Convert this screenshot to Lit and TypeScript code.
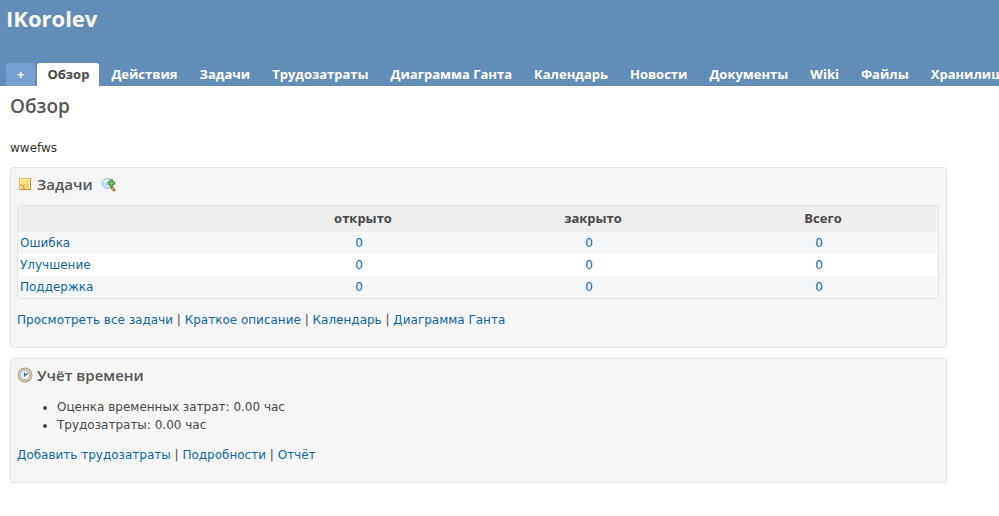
import { LitElement, html, css, svg } from "lit";
import { customElement } from "lit/decorators.js";

const TABS = [
  "Обзор", "Действия", "Задачи", "Трудозатраты", "Диаграмма Ганта", "Календарь",
  "Новости", "Документы", "Wiki", "Файлы", "Хранилище",
];
const TRACKERS = ["Ошибка", "Улучшение", "Поддержка"];
const COLUMNS = ["открыто", "закрыто", "Всего"];

const noteIcon = html`<svg class="icon" viewBox="0 0 16 16" aria-hidden="true">${svg`
  <defs><linearGradient id="n" x1="0" y1="0" x2="1" y2="1">
    <stop offset="0" stop-color="#fff0b0"/><stop offset=".5" stop-color="#fbdc7c"/><stop offset="1" stop-color="#f7bd3c"/>
  </linearGradient></defs>
  <path d="M2.500 2.500h11v11h-11z" fill="url(#n)"/>
  <path d="M3.500 8v-4.500h9v9H8" fill="none" stroke="#fff0b8"/>
  <path d="M2.500 13.500v-11h11" fill="none" stroke="#f0b45c"/>
  <path d="M13.500 2.500v11h-11" fill="none" stroke="#dc8425"/>
  <path d="M3 8.500h4.500v4.500h-4.500z" fill="#fff4d0"/>
  <path d="M3 8.500h1.500M7.500 13v-1.500M4 9.500h3.500v-1M6.500 9.500v3M3.500 10l3 3" fill="none" stroke="#e39a3c"/>`}</svg>`;

const zoomIcon = html`<svg class="icon" viewBox="0 0 16 16" aria-hidden="true">${svg`
  <path d="M11 12l2 2" stroke="#a8703e" stroke-width="3" stroke-linecap="round"/>
  <path d="M11 12l2 2" stroke="#f0c897"/>
  <ellipse cx="6.500" cy="7.500" rx="5.500" ry="5" fill="#c5dcf6" stroke="#a3c2e6"/>
  <path d="M3 7c.5-2 2.500-2.500 4-2.500" fill="none" stroke="#eef6ff" stroke-width="2"/>
  <path d="M10.500 3.500v7.500M6.800 7.200h7.400" stroke="#3c8a3c" stroke-width="3.200"/>
  <path d="M10.500 4.500v5.500M7.800 7.200h5.400" stroke="#7cc468" stroke-width="1.400"/>`}</svg>`;

const clockIcon = html`<svg class="icon" viewBox="0 0 16 16" aria-hidden="true">${svg`
  <circle cx="8" cy="8" r="6.800" fill="#fff" stroke="#b09868" stroke-width="1.200"/>
  <circle cx="8" cy="8" r="5.900" fill="none" stroke="#e6cf98"/>
  <circle cx="8" cy="8" r="4.900" fill="#f0f6ff" stroke="#7f9fd8"/>
  <path d="M7.500 5.500v3.500l3.500-3" fill="none" stroke="#56606f" stroke-width="1.200"/>`}</svg>`;

@customElement("app-root")
export class AppRoot extends LitElement {
  static styles = css`
    :host {
      display: block;
      min-height: 100vh;
      background: #fff;
      color: #484848;
      font: 12px/18px "DejaVu Sans", sans-serif;
      overflow-x: hidden;
    }
    a { color: #116699; text-decoration: none; }
    a:hover { color: #c61a1a; text-decoration: underline; }
    h1, h2, h3 { margin: 0; font-family: "Open Sans", sans-serif; color: #555; }
    header {
      display: flex;
      flex-direction: column;
      gap: 30px;
      padding: 3px 0 0 6px;
      background: #628db6;
      overflow: hidden;
    }
    h1 { font-size: 22px; line-height: 30px; font-weight: 700; color: #f8f8f8; }
    .tabs { display: flex; gap: 2px; margin: 0; padding: 0; list-style: none; font: 700 13px/18px "Open Sans", sans-serif; }
    .tab {
      display: block;
      padding: 2px 10px 3px;
      border-radius: 3px 3px 0 0;
      white-space: nowrap;
      color: #fff;
    }
    .tab.add { padding: 2px 11px 3px; background: #759fcf; font: inherit; border: 0; }
    .tab.selected { background: #fff; color: #484848; }
    main { padding: 8px 52px 20px 10px; }
    h2 { font-size: 19px; line-height: 24px; font-weight: 600; }
    .description { margin: 21px 0 10px; color: #333; }
    .box {
      margin-bottom: 10px;
      padding: 5px 7px 18px 6px;
      border: 1px solid #e4e4e4;
      border-radius: 3px;
      background: #f6f6f6;
    }
    h3 { display: flex; align-items: center; gap: 4px; font-size: 15px; line-height: 22px; font-weight: 600; }
    h3 a { display: flex; margin-left: 4px; }
    .icon { display: block; width: 16px; height: 16px; }
    .list {
      width: 100%;
      margin-top: 10px;
      border: 1px solid #e4e4e4;
      border-radius: 3px;
      border-collapse: separate;
      border-spacing: 0;
      table-layout: fixed;
      overflow: hidden;
    }
    .list th, .list td { padding: 2px 10px 2px 2px; text-align: center; font-weight: 400; }
    .list .name { text-align: left; }
    .list thead th, .list thead td { padding: 3px 4px 5px; background: #eee; font: 700 13px/18px "Open Sans", sans-serif; }
    .list tbody tr { background: #fff; }
    .list tbody tr:nth-child(odd) { background: #f6f7f8; }
    .links { margin: 12px 0 0; }
    .totals { margin: 12px 0; padding-left: 40px; }
  `;

  private links(items: string[]) {
    return html`<p class="links">${items.map((t, i) => html`${i ? " | " : ""}<a href="#">${t}</a>`)}</p>`;
  }

  render() {
    return html`
      <header>
        <h1>IKorolev</h1>
        <nav>
          <ul class="tabs">
            <li><button class="tab add">+</button></li>
            ${TABS.map((t, i) => html`<li><a class="tab ${i === 0 ? "selected" : ""}" href="#">${t}</a></li>`)}
          </ul>
        </nav>
      </header>
      <main>
        <h2>Обзор</h2>
        <p class="description">wwefws</p>
        <section class="box">
          <h3>${noteIcon}Задачи<a href="#" aria-label="Подробности">${zoomIcon}</a></h3>
          <table class="list">
            <thead><tr><td></td>${COLUMNS.map((c) => html`<th scope="col">${c}</th>`)}</tr></thead>
            <tbody>
              ${TRACKERS.map((t) => html`<tr>
                <th class="name" scope="row"><a href="#">${t}</a></th>
                ${COLUMNS.map(() => html`<td><a href="#">0</a></td>`)}
              </tr>`)}
            </tbody>
          </table>
          ${this.links(["Просмотреть все задачи", "Краткое описание", "Календарь", "Диаграмма Ганта"])}
        </section>
        <section class="box">
          <h3>${clockIcon}Учёт времени</h3>
          <ul class="totals">
            <li>Оценка временных затрат: 0.00 час</li>
            <li>Трудозатраты: 0.00 час</li>
          </ul>
          ${this.links(["Добавить трудозатраты", "Подробности", "Отчёт"])}
        </section>
      </main>
    `;
  }
}
